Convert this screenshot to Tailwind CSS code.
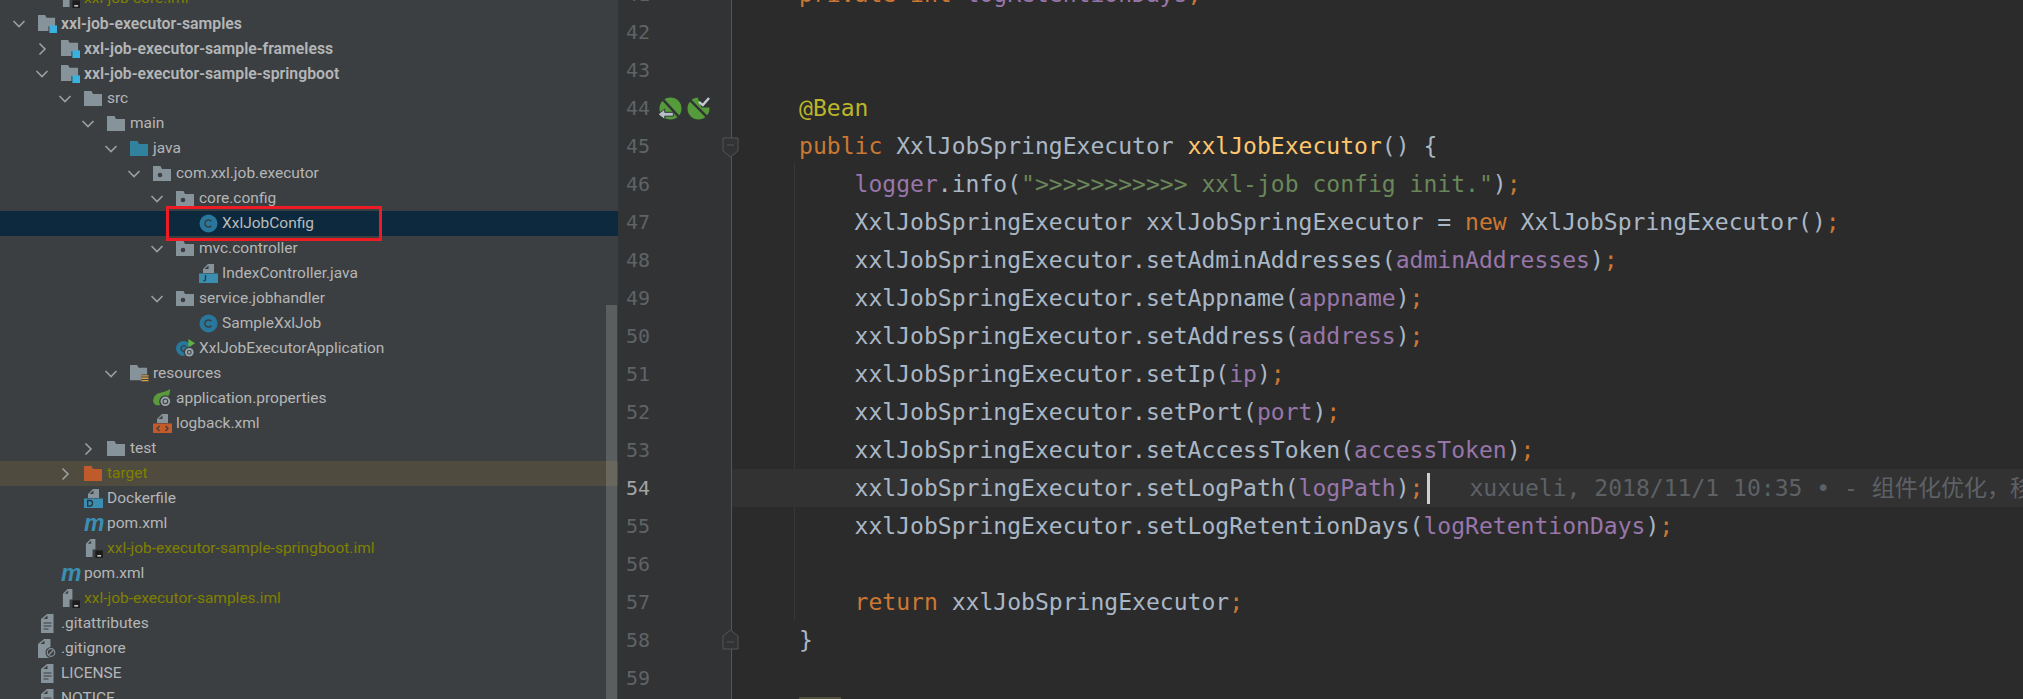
<!DOCTYPE html>
<html>
  <head>
    <meta charset="utf-8" />
    <title>XxlJobConfig</title>
    <script src="https://cdn.jsdelivr.net/npm/@tailwindcss/browser@4"></script>
  </head>

  <body class="bg-[#2b2b2b] overflow-hidden">
    <!-- shared icons -->
    <svg class="hidden">
      <symbol id="chev-down" viewBox="0 0 18 18"><path d="M3.500 6 9 11.500 14.500 6" fill="none" stroke="#9da0a2" stroke-width="1.600" /></symbol>
      <symbol id="chev-right" viewBox="0 0 18 18"><path d="M6.500 3.500 12 9l-5.500 5.500" fill="none" stroke="#9da0a2" stroke-width="1.600" /></symbol>
      <symbol id="folder" viewBox="0 0 19 19"><path d="M0 2h7.500l1.500 3h9v12H0z" fill="#87939a" /></symbol>
      <symbol id="folder-blue" viewBox="0 0 19 19"><path d="M0 2h7.500l1.500 3h9v12H0z" fill="#30829f" /></symbol>
      <symbol id="folder-orange" viewBox="0 0 19 19"><path d="M0 2h7.500l1.500 3h9v12H0z" fill="#bf5b2a" /></symbol>
      <symbol id="package" viewBox="0 0 19 19"><path d="M0 2h7.500l1.500 3h9v12H0z" fill="#87939a" /><circle cx="7" cy="11" r="2.300" fill="#3c3f41" /></symbol>
      <symbol id="module" viewBox="0 0 20 20"><path d="M0 1h7.500l1.500 3h9v9h-7v5H0z" fill="#87939a" /><rect x="12" y="12" width="8" height="8" fill="#3bb1e0" /></symbol>
      <symbol id="res" viewBox="0 0 20 20"><path d="M0 1h7.500l1.500 3h9v7h-6v6H0z" fill="#87939a" /><path d="M12 12.500h7.500M12 15h7.500M12 17.500h7.500" stroke="#d9a343" stroke-width="1.500" /></symbol>
      <symbol id="cls" viewBox="0 0 19 19"><circle cx="9.500" cy="9.500" r="9" fill="#27789c" /><path d="M12.300 7.300a3.600 3.600 0 1 0 0 4.400" fill="none" stroke="#3c3f41" stroke-width="1.500" /></symbol>
      <symbol id="java" viewBox="0 0 19 19"><path d="M9 0h6v9H4V5z" fill="#87939a" /><path d="M5.500 5 9.500 1.500V5z" fill="#3c3f41" /><rect y="9.500" width="19" height="9.500" fill="#3b8eb0" /><path d="M6.500 11v4.500q0 1.500-2 1.500" fill="none" stroke="#24353d" stroke-width="1.300" /></symbol>
      <symbol id="xml" viewBox="0 0 19 19"><path d="M9 0h6v9H4V5z" fill="#87939a" /><path d="M5.500 5 9.500 1.500V5z" fill="#3c3f41" /><rect y="9.500" width="19" height="9.500" fill="#c45a2a" /><path d="M6.500 12 4 14.500 6.500 17M12.500 12 15 14.500 12.500 17" fill="none" stroke="#3c3f41" stroke-width="1.300" /></symbol>
      <symbol id="docker" viewBox="0 0 19 19"><path d="M9 0h6v9H4V5z" fill="#87939a" /><path d="M5.500 5 9.500 1.500V5z" fill="#3c3f41" /><rect y="9.500" width="19" height="9.500" fill="#3b8eb0" /><path d="M3.700 11.500h2.200q2.600 0 2.600 2.800t-2.600 2.800H3.700z" fill="none" stroke="#24353d" stroke-width="1.300" /></symbol>
      <symbol id="iml" viewBox="0 0 20 20"><path d="M7 0h5v11H9v8H2V5z" fill="#87939a" /><path d="M4 5 7.500 1.500V5z" fill="#3c3f41" /><rect x="12" y="12" width="8" height="8" fill="#1c1c1c" /><rect x="14" y="17" width="4" height="1.500" fill="#ddd" /></symbol>
      <symbol id="text" viewBox="0 0 13 19"><path d="M6 0h6.500v19H0V5z" fill="#87939a" /><path d="M2.500 5 6.500 1.500V5z" fill="#3c3f41" /><path d="M2.500 9h8M2.500 12h8M2.500 15h5" stroke="#3c3f41" stroke-width="1.200" /></symbol>
      <symbol id="ignore" viewBox="0 0 19 19"><path d="M6 0h6.500v19H0V5z" fill="#87939a" /><path d="M2.500 5 6.500 1.500V5z" fill="#3c3f41" /><circle cx="13" cy="13.500" r="5.500" fill="#3c3f41" /><circle cx="13" cy="13.500" r="3.800" fill="none" stroke="#87939a" stroke-width="1.200" /><path d="M10.500 16 15.500 11" stroke="#87939a" stroke-width="1.200" /></symbol>
      <symbol id="spring" viewBox="0 0 20 20"><path d="M0 12Q1 5 8 4 14 3 18 0q0 6-3 9l-8 8H3Q0 15 0 12z" fill="#5a9a3c" /><circle cx="13" cy="13" r="6.500" fill="#3c3f41" /><circle cx="13" cy="13" r="5" fill="#9aa5ab" /><circle cx="13" cy="13" r="2.500" fill="none" stroke="#3c3f41" stroke-width="1.200" /></symbol>
      <symbol id="app" viewBox="0 0 20 20"><circle cx="8" cy="10" r="8" fill="#27789c" /><path d="M10.500 8a3 3 0 1 0 0 4" fill="none" stroke="#3c3f41" stroke-width="1.400" /><path d="M13 0l7 4.500-7 4.500z" fill="#5fb141" /><circle cx="14" cy="14" r="6" fill="#3c3f41" /><circle cx="14" cy="14" r="4.500" fill="#9aa5ab" /><circle cx="14" cy="14" r="2" fill="none" stroke="#3c3f41" stroke-width="1.100" /></symbol>
      <symbol id="gutter-run" viewBox="0 0 24 24"><circle cx="12" cy="12" r="11.500" fill="#559a3b" /><path d="M3 1.500 21 21" stroke="#313335" stroke-width="2.500" /><path d="M-1 18 6 12.500V16h9v4H6v3.500z" fill="#b4bfc6" stroke="#313335" stroke-width="1" /></symbol>
      <symbol id="gutter-ok" viewBox="0 0 24 24"><circle cx="12" cy="12" r="11.500" fill="#559a3b" /><path d="M3 3 21 21" stroke="#313335" stroke-width="2.500" /><path d="M11 0h13v11H15z" fill="#313335" /><path d="M12.500 5l4 3.500L23 1" fill="none" stroke="#c4ccd1" stroke-width="2.500" /></symbol>
    </svg>

    <div class="flex h-[699px] overflow-hidden font-['Liberation_Mono',monospace]">
      <!-- project tree -->
      <aside class="relative w-[618px] shrink-0 h-full overflow-hidden bg-[#3c3f41] text-[#b4b6b8] text-[15.5px] font-['Roboto','Noto_Sans_CJK_SC',sans-serif]">
        <div class="-mt-[14px] flex flex-col">
          <div class="flex items-center h-[25px] pl-[33px] text-[#808000]"><span class="w-[18px] mr-[10px]"></span><svg class="w-[19px] h-[19px] mr-[4px]"><use href="#iml" /></svg>xxl-job-core.iml</div>
          <div class="flex items-center h-[25px] pl-[10px] font-semibold text-[15.8px]"><svg class="w-[18px] h-[18px] mr-[10px]"><use href="#chev-down" /></svg><svg class="w-[19px] h-[19px] mr-[4px]"><use href="#module" /></svg>xxl-job-executor-samples</div>
          <div class="flex items-center h-[25px] pl-[33px] font-semibold text-[15.8px]"><svg class="w-[18px] h-[18px] mr-[10px]"><use href="#chev-right" /></svg><svg class="w-[19px] h-[19px] mr-[4px]"><use href="#module" /></svg>xxl-job-executor-sample-frameless</div>
          <div class="flex items-center h-[25px] pl-[33px] font-semibold text-[15.8px]"><svg class="w-[18px] h-[18px] mr-[10px]"><use href="#chev-down" /></svg><svg class="w-[19px] h-[19px] mr-[4px]"><use href="#module" /></svg>xxl-job-executor-sample-springboot</div>
          <div class="flex items-center h-[25px] pl-[56px]"><svg class="w-[18px] h-[18px] mr-[10px]"><use href="#chev-down" /></svg><svg class="w-[19px] h-[19px] mr-[4px]"><use href="#folder" /></svg>src</div>
          <div class="flex items-center h-[25px] pl-[79px]"><svg class="w-[18px] h-[18px] mr-[10px]"><use href="#chev-down" /></svg><svg class="w-[19px] h-[19px] mr-[4px]"><use href="#folder" /></svg>main</div>
          <div class="flex items-center h-[25px] pl-[102px]"><svg class="w-[18px] h-[18px] mr-[10px]"><use href="#chev-down" /></svg><svg class="w-[19px] h-[19px] mr-[4px]"><use href="#folder-blue" /></svg>java</div>
          <div class="flex items-center h-[25px] pl-[125px]"><svg class="w-[18px] h-[18px] mr-[10px]"><use href="#chev-down" /></svg><svg class="w-[19px] h-[19px] mr-[4px]"><use href="#package" /></svg>com.xxl.job.executor</div>
          <div class="flex items-center h-[25px] pl-[148px]"><svg class="w-[18px] h-[18px] mr-[10px]"><use href="#chev-down" /></svg><svg class="w-[19px] h-[19px] mr-[4px]"><use href="#package" /></svg>core.config</div>
          <div class="flex items-center h-[25px] pl-[171px] bg-[#0d293e] text-[#bbbbbb]"><span class="w-[18px] mr-[10px]"></span><svg class="w-[19px] h-[19px] mr-[4px]"><use href="#cls" /></svg>XxlJobConfig</div>
          <div class="flex items-center h-[25px] pl-[148px]"><svg class="w-[18px] h-[18px] mr-[10px]"><use href="#chev-down" /></svg><svg class="w-[19px] h-[19px] mr-[4px]"><use href="#package" /></svg>mvc.controller</div>
          <div class="flex items-center h-[25px] pl-[171px]"><span class="w-[18px] mr-[10px]"></span><svg class="w-[19px] h-[19px] mr-[4px]"><use href="#java" /></svg>IndexController.java</div>
          <div class="flex items-center h-[25px] pl-[148px]"><svg class="w-[18px] h-[18px] mr-[10px]"><use href="#chev-down" /></svg><svg class="w-[19px] h-[19px] mr-[4px]"><use href="#package" /></svg>service.jobhandler</div>
          <div class="flex items-center h-[25px] pl-[171px]"><span class="w-[18px] mr-[10px]"></span><svg class="w-[19px] h-[19px] mr-[4px]"><use href="#cls" /></svg>SampleXxlJob</div>
          <div class="flex items-center h-[25px] pl-[148px]"><span class="w-[18px] mr-[10px]"></span><svg class="w-[19px] h-[19px] mr-[4px]"><use href="#app" /></svg>XxlJobExecutorApplication</div>
          <div class="flex items-center h-[25px] pl-[102px]"><svg class="w-[18px] h-[18px] mr-[10px]"><use href="#chev-down" /></svg><svg class="w-[19px] h-[19px] mr-[4px]"><use href="#res" /></svg>resources</div>
          <div class="flex items-center h-[25px] pl-[125px]"><span class="w-[18px] mr-[10px]"></span><svg class="w-[19px] h-[19px] mr-[4px]"><use href="#spring" /></svg>application.properties</div>
          <div class="flex items-center h-[25px] pl-[125px]"><span class="w-[18px] mr-[10px]"></span><svg class="w-[19px] h-[19px] mr-[4px]"><use href="#xml" /></svg>logback.xml</div>
          <div class="flex items-center h-[25px] pl-[79px]"><svg class="w-[18px] h-[18px] mr-[10px]"><use href="#chev-right" /></svg><svg class="w-[19px] h-[19px] mr-[4px]"><use href="#folder" /></svg>test</div>
          <div class="flex items-center h-[25px] pl-[56px] bg-[#4f4b3f] text-[#808000]"><svg class="w-[18px] h-[18px] mr-[10px]"><use href="#chev-right" /></svg><svg class="w-[19px] h-[19px] mr-[4px]"><use href="#folder-orange" /></svg>target</div>
          <div class="flex items-center h-[25px] pl-[56px]"><span class="w-[18px] mr-[10px]"></span><svg class="w-[19px] h-[19px] mr-[4px]"><use href="#docker" /></svg>Dockerfile</div>
          <div class="flex items-center h-[25px] pl-[56px]"><span class="w-[18px] mr-[10px]"></span><span class="w-[19px] mr-[4px] text-[23px] leading-[25px] font-bold italic text-[#3a8fb3] font-['Liberation_Sans',sans-serif]">m</span>pom.xml</div>
          <div class="flex items-center h-[25px] pl-[56px] text-[#808000]"><span class="w-[18px] mr-[10px]"></span><svg class="w-[19px] h-[19px] mr-[4px]"><use href="#iml" /></svg>xxl-job-executor-sample-springboot.iml</div>
          <div class="flex items-center h-[25px] pl-[33px]"><span class="w-[18px] mr-[10px]"></span><span class="w-[19px] mr-[4px] text-[23px] leading-[25px] font-bold italic text-[#3a8fb3] font-['Liberation_Sans',sans-serif]">m</span>pom.xml</div>
          <div class="flex items-center h-[25px] pl-[33px] text-[#808000]"><span class="w-[18px] mr-[10px]"></span><svg class="w-[19px] h-[19px] mr-[4px]"><use href="#iml" /></svg>xxl-job-executor-samples.iml</div>
          <div class="flex items-center h-[25px] pl-[10px]"><span class="w-[18px] mr-[10px]"></span><svg class="w-[19px] h-[19px] mr-[4px]"><use href="#text" /></svg>.gitattributes</div>
          <div class="flex items-center h-[25px] pl-[10px]"><span class="w-[18px] mr-[10px]"></span><svg class="w-[19px] h-[19px] mr-[4px]"><use href="#ignore" /></svg>.gitignore</div>
          <div class="flex items-center h-[25px] pl-[10px]"><span class="w-[18px] mr-[10px]"></span><svg class="w-[19px] h-[19px] mr-[4px]"><use href="#text" /></svg>LICENSE</div>
          <div class="flex items-center h-[25px] pl-[10px]"><span class="w-[18px] mr-[10px]"></span><svg class="w-[19px] h-[19px] mr-[4px]"><use href="#text" /></svg>NOTICE</div>
        </div>
        <!-- scrollbar thumb -->
        <div class="absolute left-[606px] top-[305px] bottom-0 w-[11px] bg-[#a6a6a6]/30"></div>
        <!-- red annotation box -->
        <div class="absolute left-[166px] top-[206px] w-[216px] h-[35px] border-[3px] border-[#ed1c24]"></div>
      </aside>

      <!-- gutter -->
      <div class="relative z-10 w-[114px] shrink-0 h-full bg-[#313335] border-r border-[#555555] font-['DejaVu_Sans_Mono',monospace] text-[20px] text-[#606366]">
        <div class="-mt-[25px] flex flex-col pl-[8px]">
          <div class="h-[38px] leading-[38px]">41</div>
          <div class="h-[38px] leading-[38px]">42</div>
          <div class="h-[38px] leading-[38px]">43</div>
          <div class="h-[38px] leading-[38px] flex items-center gap-[9px]">44
            <div class="flex gap-[5px]">
              <svg class="w-[23px] h-[23px]"><use href="#gutter-run" /></svg>
              <svg class="w-[23px] h-[23px]"><use href="#gutter-ok" /></svg>
            </div>
          </div>
          <div class="h-[38px] leading-[38px]">45</div>
          <div class="h-[38px] leading-[38px]">46</div>
          <div class="h-[38px] leading-[38px]">47</div>
          <div class="h-[38px] leading-[38px]">48</div>
          <div class="h-[38px] leading-[38px]">49</div>
          <div class="h-[38px] leading-[38px]">50</div>
          <div class="h-[38px] leading-[38px]">51</div>
          <div class="h-[38px] leading-[38px]">52</div>
          <div class="h-[38px] leading-[38px]">53</div>
          <div class="h-[38px] leading-[38px] text-[#a4a3a3]">54</div>
          <div class="h-[38px] leading-[38px]">55</div>
          <div class="h-[38px] leading-[38px]">56</div>
          <div class="h-[38px] leading-[38px]">57</div>
          <div class="h-[38px] leading-[38px]">58</div>
          <div class="h-[38px] leading-[38px]">59</div>
        </div>
        <!-- fold markers -->
        <svg class="absolute left-[104px] top-[137px] w-[18px] h-[21px]" viewBox="0 0 18 21"><path d="M1 1h15v13l-7.500 6L1 14z" fill="#313335" stroke="#555555" /><path d="M5 8h7" stroke="#555555" /></svg>
        <svg class="absolute left-[104px] top-[629px] w-[18px] h-[21px]" viewBox="0 0 18 21"><path d="M1 20h15V7L8.500 1 1 7z" fill="#313335" stroke="#555555" /><path d="M5 13h7" stroke="#555555" /></svg>
      </div>

      <!-- editor -->
      <main class="relative flex-1 h-full overflow-hidden font-['DejaVu_Sans_Mono','Noto_Sans_CJK_SC',monospace] text-[23.05px] text-[#a9b7c6]">
        <div class="absolute left-[62px] top-[163px] h-[457px] w-px bg-[#373737]"></div>
        <div class="relative -mt-[25px] flex flex-col whitespace-pre">
          <div class="h-[38px] leading-[38px] pl-[67px]"><span class="text-[#cc7832]">private int </span><span class="text-[#9876aa]">logRetentionDays</span><span class="text-[#cc7832]">;</span></div>
          <div class="h-[38px] leading-[38px] pl-[67px]"></div>
          <div class="h-[38px] leading-[38px] pl-[67px]"></div>
          <div class="h-[38px] leading-[38px] pl-[67px] text-[#bbb529]">@Bean</div>
          <div class="h-[38px] leading-[38px] pl-[67px]"><span class="text-[#cc7832]">public </span>XxlJobSpringExecutor <span class="text-[#ffc66d]">xxlJobExecutor</span>() {</div>
          <div class="h-[38px] leading-[38px] pl-[67px]">    <span class="text-[#9876aa]">logger</span>.info(<span class="text-[#6a8759]">"&gt;&gt;&gt;&gt;&gt;&gt;&gt;&gt;&gt;&gt;&gt; xxl-job config init."</span>)<span class="text-[#cc7832]">;</span></div>
          <div class="h-[38px] leading-[38px] pl-[67px]">    XxlJobSpringExecutor xxlJobSpringExecutor = <span class="text-[#cc7832]">new </span>XxlJobSpringExecutor()<span class="text-[#cc7832]">;</span></div>
          <div class="h-[38px] leading-[38px] pl-[67px]">    xxlJobSpringExecutor.setAdminAddresses(<span class="text-[#9876aa]">adminAddresses</span>)<span class="text-[#cc7832]">;</span></div>
          <div class="h-[38px] leading-[38px] pl-[67px]">    xxlJobSpringExecutor.setAppname(<span class="text-[#9876aa]">appname</span>)<span class="text-[#cc7832]">;</span></div>
          <div class="h-[38px] leading-[38px] pl-[67px]">    xxlJobSpringExecutor.setAddress(<span class="text-[#9876aa]">address</span>)<span class="text-[#cc7832]">;</span></div>
          <div class="h-[38px] leading-[38px] pl-[67px]">    xxlJobSpringExecutor.setIp(<span class="text-[#9876aa]">ip</span>)<span class="text-[#cc7832]">;</span></div>
          <div class="h-[38px] leading-[38px] pl-[67px]">    xxlJobSpringExecutor.setPort(<span class="text-[#9876aa]">port</span>)<span class="text-[#cc7832]">;</span></div>
          <div class="h-[38px] leading-[38px] pl-[67px]">    xxlJobSpringExecutor.setAccessToken(<span class="text-[#9876aa]">accessToken</span>)<span class="text-[#cc7832]">;</span></div>
          <div class="h-[38px] leading-[38px] pl-[67px] bg-[#323232] flex items-center">    xxlJobSpringExecutor.setLogPath(<span class="text-[#9876aa]">logPath</span>)<span class="text-[#cc7832]">;</span><span class="ml-[4px] w-[3px] h-[31px] shrink-0 bg-[#d0d0d0]"></span><span class="ml-[39px] text-[#5d6166]">xuxueli, 2018/11/1 10:35 • - 组件化优化，移除</span></div>
          <div class="h-[38px] leading-[38px] pl-[67px]">    xxlJobSpringExecutor.setLogRetentionDays(<span class="text-[#9876aa]">logRetentionDays</span>)<span class="text-[#cc7832]">;</span></div>
          <div class="h-[38px] leading-[38px] pl-[67px]"></div>
          <div class="h-[38px] leading-[38px] pl-[67px]">    <span class="text-[#cc7832]">return </span>xxlJobSpringExecutor<span class="text-[#cc7832]">;</span></div>
          <div class="h-[38px] leading-[38px] pl-[67px]">}</div>
          <div class="h-[38px] leading-[38px] pl-[67px]"></div>
          <div class="h-[38px] pl-[67px]"><div class="w-[42px] h-[38px] bg-[#52503a]"></div></div>
        </div>
      </main>
    </div>
  </body>
</html>
